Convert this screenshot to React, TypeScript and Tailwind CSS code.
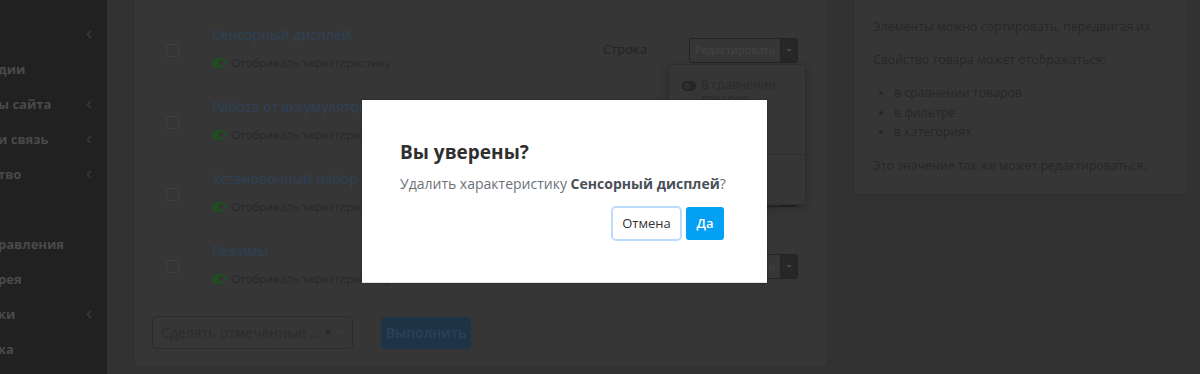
import React from "react";

// пункты бокового меню (меню прокручено влево, видны только окончания)
const menu = [
  { label: "", arrow: true },
  { label: "дии", arrow: false },
  { label: "ы сайта", arrow: true },
  { label: "и связь", arrow: true },
  { label: "тво", arrow: true },
  { label: "", arrow: false },
  { label: "равления", arrow: false },
  { label: "рея", arrow: false },
  { label: "ки", arrow: true },
  { label: "ка", arrow: false },
];

const features = [
  "Сенсорный дисплей",
  "Работа от аккумулятора",
  "Установочный набор",
  "Режимы",
];

function Chevron() {
  return (
    <svg width="6" height="9" viewBox="0 0 6 9" className="text-[#3b3b3b]">
      <path d="M4.8 1 1.4 4.5 4.8 8" fill="none" stroke="currentColor" strokeWidth="1.3" />
    </svg>
  );
}

function Toggle({ on }: { on: boolean }) {
  return (
    <span
      className={`relative inline-block w-[14px] h-[10px] rounded-full shrink-0 ${
        on ? "bg-[#1f4d24]" : "bg-[#252525]"
      }`}
    >
      <span
        className={`absolute top-[2px] w-[6px] h-[6px] rounded-full ${
          on ? "right-[2px] bg-[#353535]" : "left-[2px] bg-[#303030]"
        }`}
      />
    </span>
  );
}

function EditButton() {
  return (
    <div className="flex h-[25px] w-[109px] rounded-[3px] border border-[#242424] text-[11px] text-[#444]">
      <div className="flex-1 flex items-center justify-center">Редактировать</div>
      <div className="w-[17px] flex items-center justify-center bg-[#272727] border-l border-[#242424]">
        <span className="w-0 h-0 border-l-[3px] border-r-[3px] border-t-[3px] border-l-transparent border-r-transparent border-t-[#444]" />
      </div>
    </div>
  );
}

function ActionMenu() {
  return (
    <div className="absolute left-[534px] top-[50px] z-10 w-[138px] h-[141px] rounded-[3px] border border-[#2e2e2e] bg-[#363636] shadow-[0_3px_8px_rgba(0,0,0,0.25)] pt-[13px] text-[12px] text-[#2a2a2a]">
      <div className="flex items-start gap-[5px] pl-[13px] pr-[14px] leading-[14px]">
        <span className="mt-[2px]">
          <Toggle on={false} />
        </span>
        <span>В сравнении товаров</span>
      </div>
      <div className="flex items-center gap-[5px] pl-[13px] mt-[10px] leading-[16px]">
        <Toggle on={false} />
        <span>В фильтре</span>
      </div>
      <div className="mt-[22px] border-t border-[#2c2c2c]" />
      <div className="px-[14px] mt-[10px] leading-[16px]">Удалить</div>
    </div>
  );
}

function FeatureRow({ title, first }: { title: string; first: boolean }) {
  return (
    <div className="relative flex items-center h-[72px]">
      <div className="w-[78px] pl-[32px]">
        <span className="block w-[13px] h-[13px] rounded-[3px] border border-[#404040]" />
      </div>
      <div className="flex-1 -mt-[3px]">
        <div className="text-[14px] leading-[20px] text-[#2c4259]">{title}</div>
        <div className="mt-[9px] flex items-center gap-[5px] text-[11.5px] leading-[18px] text-[#282828]">
          <Toggle on />
          Отображать характеристику
        </div>
      </div>
      <div className="w-[86px] text-[13px] text-[#232323]">Строка</div>
      <div className="mr-[29px]">
        <EditButton />
      </div>
      {first && <ActionMenu />}
    </div>
  );
}

export default function App() {
  return (
    <div className="relative w-[1200px] h-[374px] overflow-hidden flex bg-[#323232] font-['Open_Sans',sans-serif]">
      {/* Боковое меню */}
      <aside className="w-[107px] shrink-0 bg-[#212121] pt-[17px] overflow-hidden">
        {menu.map((item, i) => (
          <div key={i} className="flex items-center justify-between h-[35px] pr-[15px]">
            <span className="-ml-[2px] text-[13px] font-bold text-[#4a4a4a] whitespace-nowrap">{item.label}</span>
            {item.arrow && <Chevron />}
          </div>
        ))}
      </aside>

      {/* Контент */}
      <main className="flex-1 flex items-start gap-[25px] pl-[26px] pr-[12px] -mt-[20px]">
        <section className="w-[695px] rounded-[6px] bg-[#363636] border border-[#2f2f2f] pt-[33px] pb-[17px]">
          {features.map((f, i) => (
            <FeatureRow key={f} title={f} first={i === 0} />
          ))}
          <div className="flex items-center gap-[28px] mt-[14px] pl-[18px]">
            <div className="flex items-center w-[201px] h-[33px] rounded-[4px] border border-[#2c2c2c] pl-[8px] pr-[8px] text-[14px] text-[#2b2b2b]">
              <span className="flex-1 whitespace-nowrap overflow-hidden">Сделать отмеченные ...</span>
              <span className="text-[13px] font-bold text-[#262626] ml-[2px] mr-[6px]">×</span>
              <span className="w-0 h-0 border-l-[3px] border-r-[3px] border-t-[4px] border-l-transparent border-r-transparent border-t-[#3a3a3a]" />
            </div>
            <button className="w-[90px] h-[32px] rounded-[4px] bg-[#1f3346] text-[14px] font-semibold text-[#2a4258]">
              Выполнить
            </button>
          </div>
        </section>

        <section className="w-[335px] rounded-[6px] bg-[#363636] border border-[#2f2f2f] pt-[36px] pb-[18px] pl-[19px] pr-[8px] text-[12.3px] leading-[20px] text-[#272727] whitespace-nowrap">
          <p>Элементы можно сортировать, передвигая их.</p>
          <p className="mt-[13px]">Свойство товара может отображаться:</p>
          <ul className="mt-[13px] list-disc pl-[21px] leading-[19.5px]">
            <li>в сравнении товаров</li>
            <li>в фильтре</li>
            <li>в категориях</li>
          </ul>
          <p className="mt-[14px]">Это значение так же может редактироваться.</p>
        </section>
      </main>

      {/* Диалог подтверждения */}
      <div className="absolute inset-0 z-20">
        <div className="absolute left-[362px] top-[100px] w-[405px] h-[183px] bg-white border-b border-[#e4e4e4] shadow-[0_0_2px_rgba(0,0,0,0.4)] pl-[38px] pr-[43px] pt-[38px]">
          <h2 className="text-[19px] leading-[28px] font-bold text-[#2f2f2f]">Вы уверены?</h2>
          <p className="mt-[8px] text-[14px] leading-[20px] text-[#6b717a] whitespace-nowrap">
            Удалить характеристику <b className="font-bold text-[#4a5059]">Сенсорный дисплей</b>?
          </p>
          <div className="mt-[12px] flex justify-end items-center gap-[4px]">
            <button className="w-[71px] h-[35px] rounded-[5px] border-2 border-[#bddcfd] bg-white text-[13px] text-[#333]">
              Отмена
            </button>
            <button className="w-[38px] h-[33px] rounded-[3px] bg-[#03a0f4] text-[13px] font-semibold text-white">
              Да
            </button>
          </div>
        </div>
      </div>
    </div>
  );
}
